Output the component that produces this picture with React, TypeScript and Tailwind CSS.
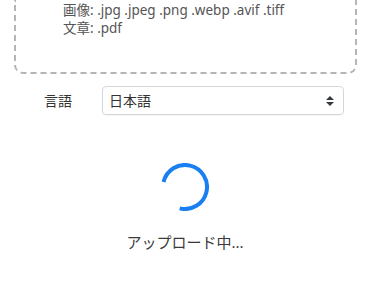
import React from 'react';

export default function App() {
  return (
    <div className="w-[370px] h-[303px] overflow-hidden bg-white text-[#444]" style={{ fontFamily: '"Noto Sans", "Noto Sans CJK JP", sans-serif' }}>
      {/* drop zone, scrolled so only its lower part shows */}
      <div className="ml-[14px] mr-[13px] border-2 border-t-0 border-dashed border-[#b5b5b5] rounded-b-[9px] pl-[47px] pt-[1px] pb-[35px] text-[13.5px] leading-[18px] text-[#555]">
        <div>画像: .jpg .jpeg .png .webp .avif .tiff</div>
        <div>文章: .pdf</div>
      </div>

      <div className="flex items-center mt-[12px] ml-[14px] mr-[26px]">
        <label className="w-[88px] text-center text-[14px] text-[#333]">言語</label>
        <div className="flex-1 h-[29px] flex items-center justify-between border border-[#d3d7db] rounded-[4px] pl-[6px] pr-[9px] text-[14px] text-[#333] shadow-[0_1px_1px_rgba(0,0,0,0.04)]">
          <span>日本語</span>
          <svg width="8" height="10" viewBox="0 0 4 5">
            <path fill="#343a40" d="M2 0L0 2h4zm0 5L0 3h4z" />
          </svg>
        </div>
      </div>

      <div className="flex flex-col items-center">
        <svg className="mt-[48px]" width="48" height="48" viewBox="0 0 48 48">
          <path d="M2.56 19.05 A22 22 0 1 1 18.68 45.35" fill="none" stroke="#1a7ff0" strokeWidth="4" />
        </svg>
        <div className="mt-[20px] text-[15px] leading-[22px] text-[#3a3a3a]">アップロード中...</div>
      </div>
    </div>
  );
}
